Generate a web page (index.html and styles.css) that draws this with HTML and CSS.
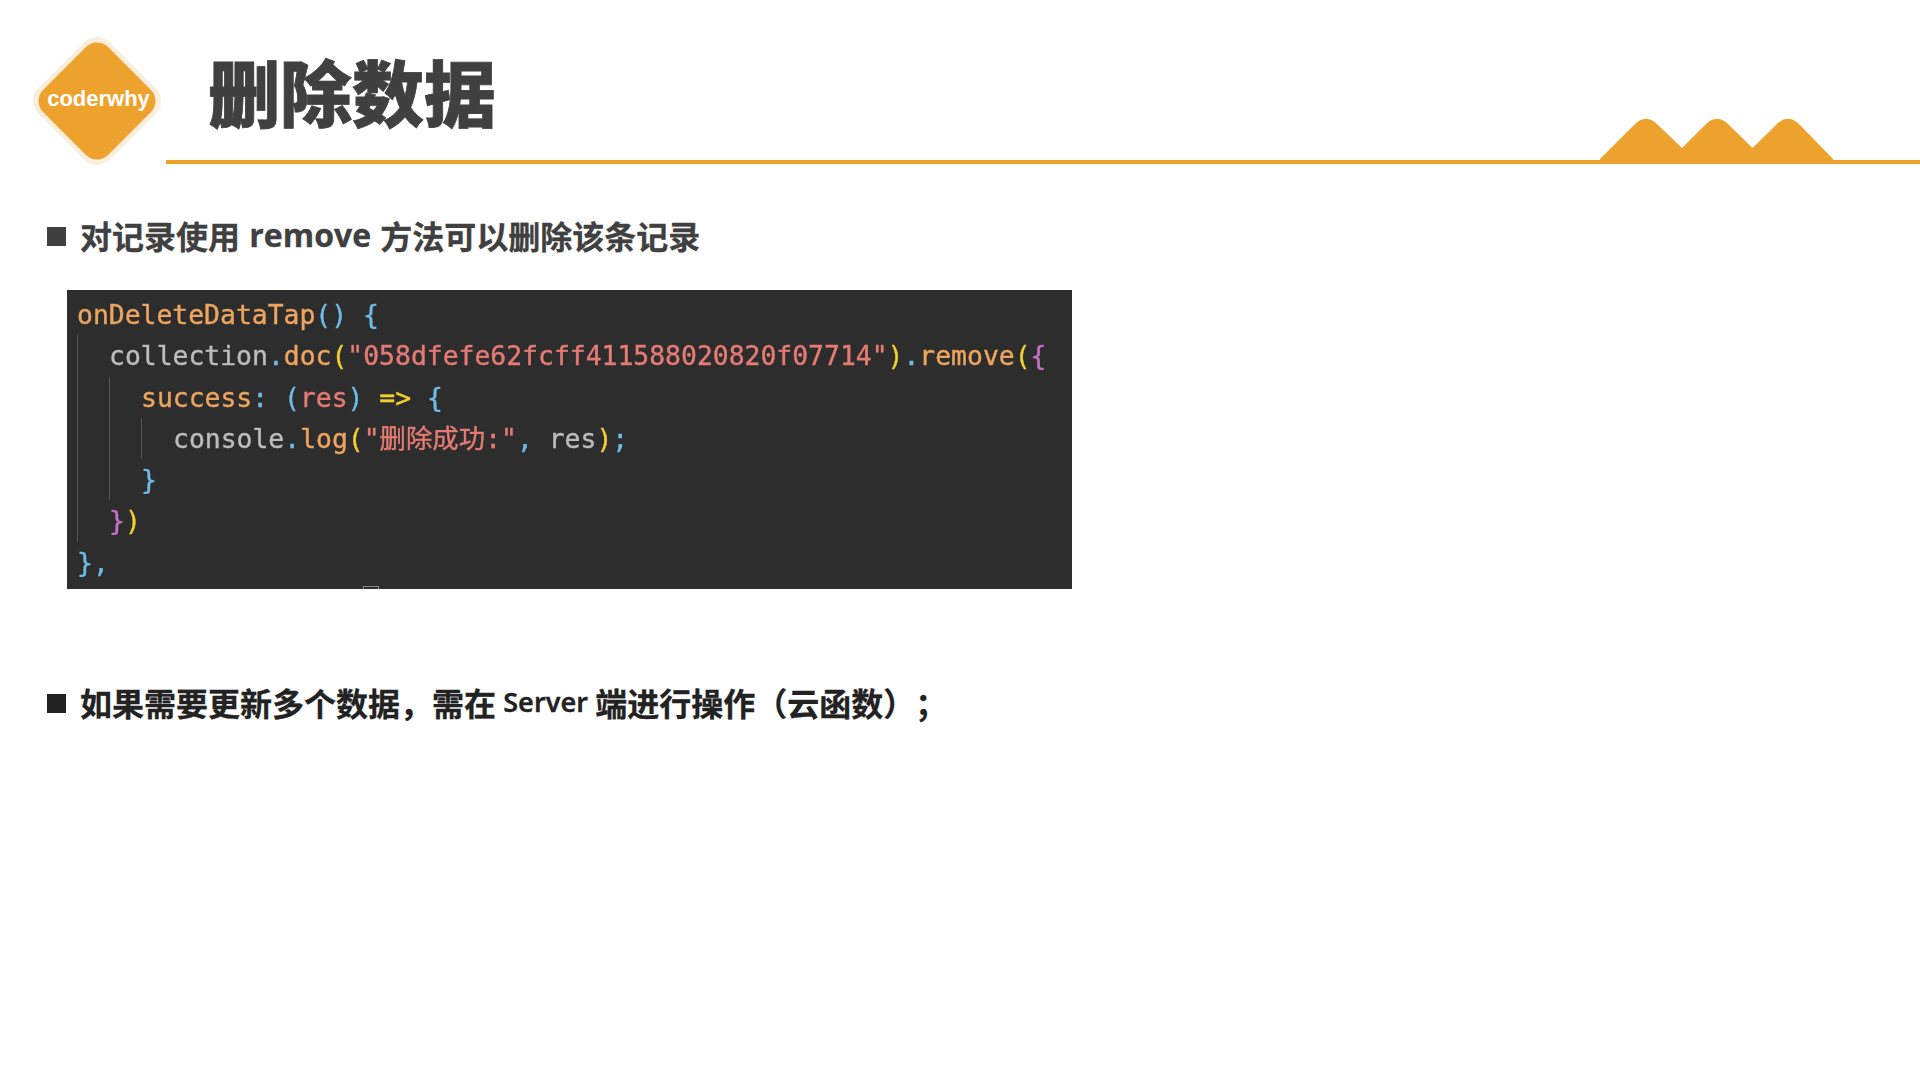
FILE: index.html
```html
<!DOCTYPE html>
<html lang="zh-CN">
<head>
<meta charset="utf-8">
<title>删除数据</title>
<link rel="stylesheet" href="styles.css">
</head>
<body>
<header class="header">
  <svg class="logo" width="128" height="128" viewBox="0 0 128 128">
    <rect class="logo-halo" x="13.5" y="13.5" width="101" height="101" rx="18" transform="rotate(45 64 64)"/>
    <rect class="logo-core" x="18" y="18" width="92" height="92" rx="16" transform="rotate(45 64 64)"/>
    <text class="logo-text" x="65.5" y="69" text-anchor="middle">coderwhy</text>
  </svg>
  <div class="title-bar">
    <h1 class="title">删除数据</h1>
    <svg class="peaks" width="233" height="46" viewBox="0 0 233 46">
      <path d="M0 41 L34 7 Q46 -5.5 58 7 L82 30 L105 7 Q117 -5.5 129 7 L152.5 30 L176 7 Q188 -5.5 200 7 L233 41 L233 46 L0 46 Z"/>
    </svg>
  </div>
</header>
<main class="content">
  <p class="point point-grey"><span class="square"></span>对记录使用 <span class="latin">remove</span> 方法可以删除该条记录</p>
  <div class="code">
    <div class="line"><span class="fn">onDeleteDataTap</span><span class="pu">() {</span></div>
    <div class="guide">
      <div class="line"><span class="id">collection</span><span class="pu">.</span><span class="fn">doc</span><span class="ye">(</span><span class="st">"058dfefe62fcff411588020820f07714"</span><span class="ye">)</span><span class="pu">.</span><span class="fn">remove</span><span class="ye">(</span><span class="ma">{</span></div>
      <div class="guide">
        <div class="line"><span class="fn">success</span><span class="pu">:</span> <span class="pu">(</span><span class="st">res</span><span class="pu">)</span> <span class="ye">=&gt;</span> <span class="pu">{</span></div>
        <div class="guide">
          <div class="line"><span class="id">console</span><span class="pu">.</span><span class="fn">log</span><span class="ye">(</span><span class="st">"<span class="cjk">删除成功</span>:"</span><span class="pu">,</span> <span class="id">res</span><span class="ye">)</span><span class="pu">;</span></div>
        </div>
        <div class="line"><span class="pu">}</span></div>
      </div>
      <div class="line"><span class="ma">}</span><span class="ye">)</span></div>
    </div>
    <div class="line"><span class="pu">},</span></div>
    <span class="artifact"></span>
  </div>
  <p class="point point-dark"><span class="square"></span>如果需要更新多个数据，需在 <span class="latin-thin">Server</span> 端进行操作（云函数）；</p>
</main>
</body>
</html>
```
FILE: styles.css
```css
html, body { margin: 0; padding: 0; background: #fff; }
body {
  width: 1920px;
  height: 1080px;
  overflow: hidden;
  font-family: "Noto Sans CJK SC", "Noto Sans", sans-serif;
}
.header {
  display: flex;
  align-items: flex-start;
  height: 164px;
  padding: 37px 0 0 33px;
  box-sizing: border-box;
}
.logo { flex: none; width: 128px; height: 128px; }
.logo-halo { fill: #fbeedd; }
.logo-core { fill: #eea22e; }
.logo-text { font: 700 22px "Liberation Sans", Arial, sans-serif; fill: #fff; }
.title-bar {
  position: relative;
  flex: 1;
  margin-left: 5px;
  margin-top: -37px;
  height: 164px;
  box-sizing: border-box;
  border-bottom: 4px solid #eea22e;
  padding: 45px 0 0 42px;
}
.title {
  margin: 0;
  font-size: 72px;
  line-height: 90px;
  font-weight: 900;
  color: #404040;
  -webkit-text-stroke: 0.8px #404040;
}
.peaks { position: absolute; right: 87px; bottom: -4px; fill: #eea22e; }
.content { padding-left: 47px; }
.point {
  display: flex;
  align-items: center;
  margin: 0;
  font-size: 32px;
  line-height: 46px;
  font-weight: 700;
  white-space: pre;
  text-spacing-trim: space-all;
  -webkit-text-stroke: 0.3px currentColor;
}
.point-grey { color: #404040; margin-top: 48px; }
.point-dark { color: #222; margin-top: 90px; }
.square {
  width: 19px;
  height: 19px;
  margin: 2px 14px 0 0;
  background: currentColor;
  flex: none;
}
.latin { font-family: "Open Sans", "Noto Sans", sans-serif; font-weight: 700; font-size: 32px; margin: 0 2px; }
.latin-thin { font-family: "Noto Sans", sans-serif; font-weight: 600; font-size: 27px; }
.code {
  position: relative;
  width: 1005px;
  height: 299px;
  margin: 32px 0 0 20px;
  padding: 4px 0 0 10px;
  box-sizing: border-box;
  background: #2d2d2d;
  font-family: "DejaVu Sans Mono", monospace;
  font-size: 26.4px;
  font-weight: 400;
  color: #bdbdbd;
}
.line {
  height: 41.3px;
  line-height: 41.3px;
  white-space: pre;
  filter: blur(0.5px);
  -webkit-text-stroke: 0.4px currentColor;
}
.guide {
  border-left: 1px solid #555;
  padding-left: 31px;
  margin-left: 0;
}
.fn { color: #eda55f; }
.id { color: #bdbdbd; }
.pu { color: #6dbce6; }
.st { color: #e57b74; }
.ye { color: #efd02e; }
.ma { color: #c671c4; }
.cjk { font-family: "Noto Sans CJK SC", sans-serif; line-height: 0; }
.artifact {
  position: absolute;
  left: 296px;
  bottom: 0;
  width: 14px;
  height: 2px;
  border: 1px solid #888;
  border-bottom: 0;
}
```
